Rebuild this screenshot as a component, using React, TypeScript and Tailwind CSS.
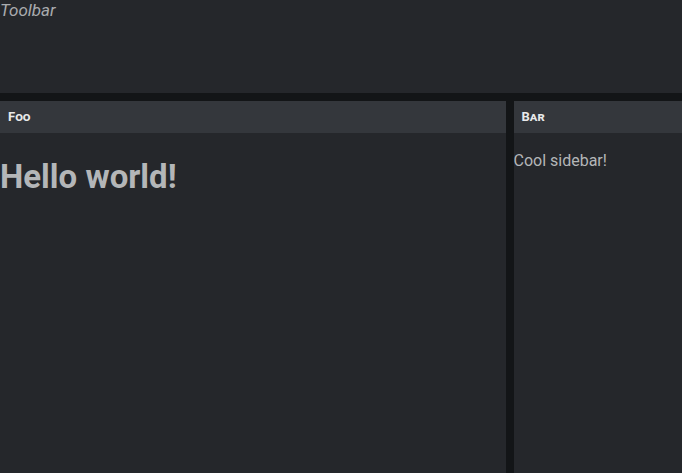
export default function App() {
  return (
    <div
      className="grid h-screen grid-rows-[1fr_4fr] gap-2 bg-[#131517] text-[#b4b6b8]"
      style={{ fontFamily: "Roboto, 'Noto Sans', sans-serif" }}
    >
      <div className="bg-[#25272b]">
        <span className="block text-[17px] leading-[20px] italic text-[#a9abae]">Toolbar</span>
      </div>
      <div className="grid min-h-0 grid-cols-[3fr_1fr] gap-2">
        <section className="flex flex-col bg-[#25272b]">
          <header className="flex h-8 shrink-0 items-center bg-[#34373c] px-2 text-[13px] font-bold text-[#e8e9ea] [font-variant:small-caps]">
            Foo
          </header>
          <div className="flow-root">
            <h1 className="mt-[19px] text-[33px] font-bold leading-normal">
              Hello world!
            </h1>
          </div>
        </section>
        <section className="flex flex-col bg-[#25272b]">
          <header className="flex h-8 shrink-0 items-center bg-[#34373c] px-2 text-[13px] font-bold text-[#e8e9ea] [font-variant:small-caps]">
            Bar
          </header>
          <div className="flow-root">
            <p className="mt-[18px] leading-[19px]">Cool sidebar!</p>
          </div>
        </section>
      </div>
    </div>
  );
}
